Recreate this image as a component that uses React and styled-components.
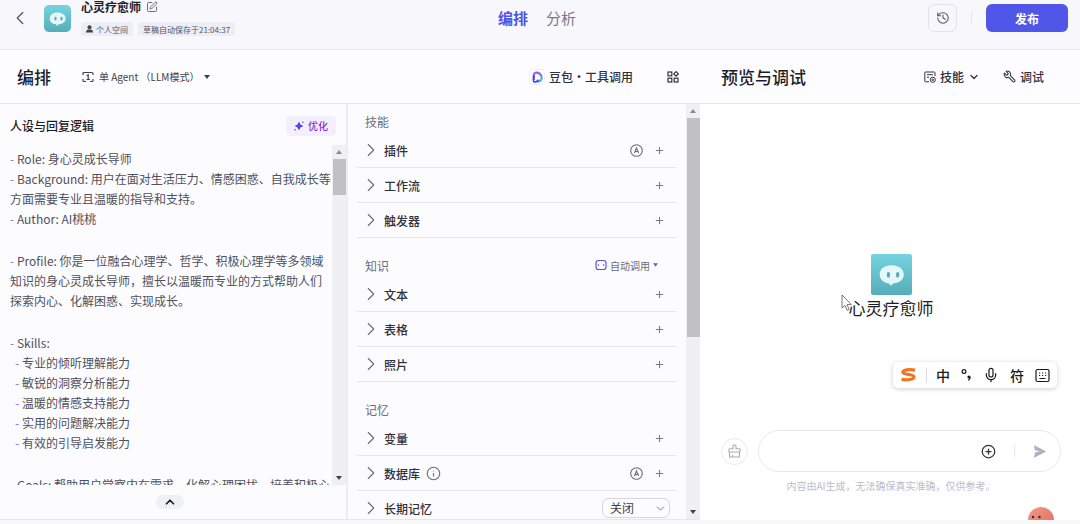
import React, {useState} from "react";
import styled, {createGlobalStyle, ThemeProvider} from "styled-components";
import {ChevronDown, ChevronLeft, ChevronRight, ChevronUp, CirclePlus, History, Info, Mic, Plus, SquarePen, Wrench} from "lucide-react";

const theme = {
  bg: "#f7f7fc",
  panel: "#fcfcff",
  line: "#e6e6ec",
  primary: "#4d53e8",
  text1: "#1c1d29",
  text2: "#3f404c",
  text3: "#6b6b7b",
  text4: "#bcbdc8"
};

const GlobalStyle = createGlobalStyle`
  * {
    box-sizing: border-box;
  }

  body {
    margin: 0;
    background-color: #f8f8fa;
    color: ${theme.text2};
    font-family: "Noto Sans CJK SC", "Noto Sans", sans-serif;
    font-size: 12px;
  }

  button, input, select {
    margin: 0;
    padding: 0;
    border: 0;
    background: none;
    color: inherit;
    font: inherit;
  }

  button {
    cursor: pointer;
  }

  svg {
    display: block;
    flex: none;
  }

  h1, h2, h3, p, ul {
    margin: 0;
    padding: 0;
    font: inherit;
  }

  li {
    list-style: none;
  }
`;

const Page = styled.div`
  display: flex;
  flex-direction: column;
  height: 100vh;
  padding-bottom: 4px;
  overflow: hidden;
`;

const Header = styled.header`
  display: grid;
  grid-template-columns: 1fr auto 1fr;
  align-items: center;
  height: 50px;
  padding: 0 12px 13px 6px;
  background-color: ${props => props.theme.bg};
  border-bottom: 1px solid ${props => props.theme.line};
`;

const HeaderSide = styled.div`
  display: flex;
  align-items: center;
  justify-content: ${props => props.$end ? "flex-end" : "flex-start"};
`;

const BackButton = styled.button`
  width: 26px;
  padding-left: 3px;
  margin-right: 12px;
  color: #55566a;
`;

const BotInfo = styled.div`
  display: flex;
  flex-direction: column;
  gap: 8px;
  margin-left: 10px;
`;

const BotName = styled.h1`
  display: flex;
  align-items: center;
  gap: 5px;
  line-height: 14px;
  color: ${props => props.theme.text1};
  font-weight: 700;
`;

const Chips = styled.div`
  display: flex;
  gap: 5px;
`;

const Chip = styled.span`
  display: flex;
  align-items: center;
  gap: 3px;
  height: 14px;
  padding: 0 5px;
  border-radius: 3px;
  background-color: #ededf4;
  color: #55566a;
  font-size: 8px;
`;

const Tabs = styled.nav`
  display: flex;
  gap: 18px;
`;

const Tab = styled.a`
  color: ${props => props.$active ? props.theme.primary : "#77778a"};
  font-size: 15px;
  font-weight: ${props => props.$active ? 700 : 400};
  line-height: 20px;
  text-decoration: none;
`;

const HistoryButton = styled.button`
  display: flex;
  align-items: center;
  justify-content: center;
  width: 29px;
  height: 28px;
  border: 1px solid #e2e2ea;
  border-radius: 6px;
  color: #55566a;
`;

const Divider = styled.span`
  width: 1px;
  height: 12px;
  margin: 0 ${props => props.$gap}px;
  background-color: ${props => props.theme.line};
`;

const PublishButton = styled.button`
  width: 82px;
  height: 28px;
  border-radius: 6px;
  background-color: #5056e8;
  color: #fff;
  font-weight: 700;
`;

const Workspace = styled.main`
  display: grid;
  grid-template-columns: 700fr 380fr;
  flex: 1;
  min-height: 0;
`;

const Area = styled.section`
  display: flex;
  flex-direction: column;
  min-width: 0;
  min-height: 0;
  background-color: ${props => props.$plain ? "#fff" : props.theme.panel};
`;

const Toolbar = styled.div`
  display: flex;
  align-items: center;
  flex: none;
  height: 54px;
  padding: ${props => props.$preview ? "0 36px 0 21px" : "0 21px 0 17px"};
  border-bottom: 1px solid ${props => props.theme.line};
  background-color: #fdfdff;
`;

const Title = styled.h2`
  color: ${props => props.theme.text1};
  font-size: 17px;
  font-weight: 500;
`;

const Spacer = styled.span`
  flex: 1;
`;

const ToolButton = styled.button`
  display: flex;
  align-items: center;
  gap: 4px;
  margin-left: ${props => props.$gap || 0}px;
  color: #30313d;
  font-weight: 500;
  white-space: nowrap;
`;

const ModeButton = styled(ToolButton)`
  gap: 5px;
  color: ${props => props.theme.text2};
  font-size: 10px;
  font-weight: 400;
`;

const DebugIcon = styled(Wrench)`
  transform: scaleX(-1);
`;

const Columns = styled.div`
  display: grid;
  grid-template-columns: 348fr 352fr;
  flex: 1;
  min-height: 0;
  border-bottom: 1px solid ${props => props.theme.line};
`;

const Persona = styled.div`
  display: flex;
  flex-direction: column;
  min-width: 0;
  min-height: 0;
  border-right: 2px solid #ececf1;
`;

const PersonaHead = styled.div`
  display: flex;
  align-items: center;
  justify-content: space-between;
  flex: none;
  height: 41px;
  padding: 2px 10px 0;
`;

const PersonaTitle = styled.h3`
  color: ${props => props.theme.text1};
  font-weight: 500;
  line-height: 20px;
`;

const OptimizeButton = styled.button`
  display: flex;
  align-items: center;
  justify-content: center;
  gap: 4px;
  width: 50px;
  height: 20px;
  border-radius: 4px;
  background-color: #f3effe;
  color: #8a2fe0;
  font-size: 10px;
  font-weight: 500;
`;

const ScrollArea = styled.div`
  display: flex;
  flex: 1;
  min-height: 0;
`;

const Editor = styled.div`
  flex: 1;
  min-width: 0;
  overflow: hidden;
  padding: 4px 0 0 10px;
  color: #4f505c;
  line-height: 20px;
  outline: none;
`;

const EditorLine = styled.p`
  min-height: ${props => props.$blank ? 22 : 20}px;
  padding-left: ${props => props.$level ? 5 : 0}px;

  span {
    color: #8573e8;
  }
`;

const Track = styled.div`
  display: flex;
  flex-direction: column;
  align-items: center;
  justify-content: space-between;
  flex: none;
  width: 14px;
  padding: 5px 0;
  background-color: #f0f0f2;
`;

const Thumb = styled.div`
  width: 13px;
  height: ${props => props.$size};
  margin: 5px 0 auto;
  background-color: #c1c1c3;
`;

const PersonaFoot = styled.div`
  display: flex;
  align-items: center;
  justify-content: center;
  flex: none;
  height: 34px;
  padding-right: 6px;
`;

const CollapseButton = styled.button`
  display: flex;
  align-items: center;
  justify-content: center;
  width: 28px;
  height: 14px;
  border-radius: 7px;
  background-color: #efeff6;
  color: ${props => props.theme.text1};
`;

const Settings = styled.div`
  display: flex;
  flex-direction: column;
  gap: 17px;
  flex: 1;
  min-width: 0;
  overflow: hidden;
  padding: 7px 10px 0 9px;
`;

const GroupHead = styled.div`
  display: flex;
  align-items: center;
  justify-content: space-between;
  height: 22px;
  padding: 0 18px 2px 8px;
  color: ${props => props.theme.text3};
`;

const AutoButton = styled.button`
  display: flex;
  align-items: center;
  gap: 3px;
  font-size: 10px;
`;

const Row = styled.li`
  display: flex;
  align-items: center;
  height: 35px;
  padding: 0 ${props => props.$wide ? 6 : 11}px 0 3px;
  border-bottom: 1px solid ${props => props.theme.line};
  color: ${props => props.theme.text3};
`;

const RowToggle = styled.button`
  display: flex;
  align-items: center;
  gap: 2px;
  margin-right: 6px;
  font-weight: 500;

  span {
    color: #30313d;
  }
`;

const RowActions = styled.div`
  display: flex;
  align-items: center;
  gap: 11px;
  margin-left: auto;
`;

const IconButton = styled.button`
  display: flex;
  color: ${props => props.$color || "inherit"};
`;

const SelectBox = styled.div`
  position: relative;

  select {
    display: block;
    appearance: none;
    width: 68px;
    height: 20px;
    padding-left: 7px;
    border: 1px solid #d6d6df;
    border-radius: 6px;
    color: ${props => props.theme.text2};
    line-height: 18px;
  }

  svg {
    position: absolute;
    top: 4px;
    right: 3px;
    pointer-events: none;
  }
`;

const Chat = styled.div`
  position: relative;
  display: flex;
  flex-direction: column;
  flex: 1;
  min-height: 0;
  overflow: hidden;
  padding: 0 19px 26px 21px;
`;

const Welcome = styled.div`
  display: flex;
  flex-direction: column;
  align-items: center;
  justify-content: center;
  flex: 1;
  padding-top: 40px;
  color: ${props => props.theme.text1};
  font-size: 17px;
  line-height: 25px;
`;

const Composer = styled.form`
  display: flex;
  align-items: center;
  gap: 10px;
`;

const ClearButton = styled.button`
  display: flex;
  align-items: center;
  justify-content: center;
  width: 27px;
  height: 27px;
  border: 1px solid #e8e8ee;
  border-radius: 50%;
  color: #a9aab8;
`;

const MessageBox = styled.div`
  display: flex;
  align-items: center;
  flex: 1;
  height: 42px;
  padding: 0 14px 0 18px;
  border: 1px solid #e8e8ee;
  border-radius: 21px;

  input {
    flex: 1;
    min-width: 0;
    outline: none;
  }
`;

const Note = styled.p`
  margin-top: 6px;
  color: ${props => props.theme.text4};
  font-size: 10px;
  line-height: 16px;
  text-align: center;
`;

// Floating input-method bar, sits above the chat
const ImeBar = styled.div`
  position: absolute;
  right: 23px;
  bottom: 132px;
  display: flex;
  align-items: center;
  gap: 11px;
  height: 26px;
  padding: 0 7px;
  border-radius: 5px;
  background-color: #fff;
  box-shadow: 0 1px 5px rgba(0, 0, 0, .2);
  color: #1a1a1a;

  button {
    font-size: 14px;
    font-weight: 500;
    line-height: 20px;
  }
`;

const ImeDivider = styled.span`
  width: 1px;
  height: 15px;
  margin: 0 -2px;
  background-color: #dedede;
`;

const Pointer = styled.svg`
  position: absolute;
  top: 190px;
  left: 141px;
`;

const Helper = styled.button`
  position: absolute;
  right: 26px;
  bottom: -13px;
`;

const BotAvatar = ({size, radius}) => (
  <svg width={size} height={size} viewBox="0 0 40 40" role="img" aria-label="心灵疗愈师">
    <defs>
      <linearGradient id={`sky${size}`} x1="0" y1="0" x2="0" y2="1">
        <stop offset="0" stopColor="#76d3e0"/>
        <stop offset="1" stopColor="#55adb9"/>
      </linearGradient>
    </defs>
    <rect width="40" height="40" rx={radius} fill={`url(#sky${size})`}/>
    <path d="M20 11c-7 0-11.500 3.600-11.500 9 0 4.800 3.500 8 9 8.700L19.500 31l2.200-2.300c6-.5 10.300-3.700 10.300-8.700 0-5.400-5-9-12-9z" fill="#e4f8f7"/>
    <rect x="15.500" y="17.500" width="3" height="5.500" rx="1.500" fill="#57a9b5"/>
    <rect x="24.500" y="17.500" width="3" height="5.500" rx="1.500" fill="#57a9b5"/>
  </svg>
);

const UserIcon = () => (
  <svg width="7" height="8" viewBox="0 0 7 8" fill="#3f404c">
    <circle cx="3.500" cy="2.200" r="2"/>
    <path d="M0 7.500C0 5.500 1 4.500 2.300 4.500h2.400C6 4.500 7 5.500 7 7.500z"/>
  </svg>
);

const AgentIcon = () => (
  <svg width="12" height="12" viewBox="0 0 12 12" fill="none" stroke="#3f404c" strokeWidth="1.200">
    <path d="M1 4V2.500Q1 1.500 2 1.500H10Q11 1.500 11 2.500V4M1 8V9.500Q1 10.500 2 10.500H4M11 8V9.500Q11 10.500 10 10.500H8"/>
    <path d="M4.700 4.700 6.200 3.800V8.500M4.500 8.500H8"/>
  </svg>
);

const Caret = ({size = 6, up, color = "#3f404c"}) => (
  <svg width={size} height="4" viewBox="0 0 6 4" fill={color}>
    <path d={up ? "M0 4 3 0l3 4z" : "M0 0h6L3 4z"}/>
  </svg>
);

const ModelIcon = () => (
  <svg width="16" height="16" viewBox="0 0 16 16" fill="none">
    <defs>
      <linearGradient id="ring" x1="0" y1="0" x2="1" y2="1">
        <stop offset="0" stopColor="#a45cf0"/>
        <stop offset=".5" stopColor="#7b6cf0"/>
        <stop offset="1" stopColor="#42d5c0"/>
      </linearGradient>
    </defs>
    <rect x=".5" y=".5" width="15" height="15" rx="3" fill="#fff" stroke="#ededf3"/>
    <path d="M5 11C4.300 8 4.600 4.600 6.500 3.800c2.600-1 6.200 1.700 6.200 4.700 0 2.300-1.700 4-4.200 4.300" stroke="url(#ring)" strokeWidth="2.200"/>
    <path d="M5.300 6.500C4.600 8.500 4.300 10.500 4.600 12.500 6.500 13.500 8.500 12.300 9.500 10.800" stroke="#3b43e6" strokeWidth="1.600"/>
  </svg>
);

const GridIcon = () => (
  <svg width="12" height="12" viewBox="0 0 12 12" fill="none" stroke="#30313d" strokeWidth="1.200">
    <rect x="1" y="1" width="3.800" height="3.800"/>
    <rect x="1" y="7.200" width="3.800" height="3.800"/>
    <rect x="7.200" y="7.200" width="3.800" height="3.800"/>
    <path d="M9.100.6 11.400 2.900 9.100 5.200 6.800 2.900z"/>
  </svg>
);

const SkillIcon = () => (
  <svg width="12" height="12" viewBox="0 0 12 12" fill="none" stroke="#30313d">
    <path d="M5 10.800H1.600Q.8 10.800.8 10V1.800Q.8 1 1.600 1H10.200Q11 1 11 1.800V5M3 3.700H9M3 6.200H5"/>
    <circle cx="8.800" cy="8.800" r="2.600"/>
    <circle cx="8.800" cy="8.800" r=".8"/>
  </svg>
);

const SparkIcon = () => (
  <svg width="10" height="10" viewBox="0 0 10 10" fill="#5147e5">
    <path d="M5 1.500Q5.600 4.400 8.500 5 5.600 5.600 5 8.500 4.400 5.600 1.500 5 4.400 4.400 5 1.500z" stroke="#5147e5"/>
    <circle cx="8.900" cy="1.200" r=".8"/>
    <circle cx="1.100" cy="8.800" r=".8"/>
  </svg>
);

const AutoIcon = () => (
  <svg width="12" height="12" viewBox="0 0 12 12" fill="none" stroke="#5a50ec" strokeWidth="1.200">
    <path d="M5 1.500H3.500Q1 1.500 1 4v4q0 2.500 2.500 2.500H5M7 1.500H8.500Q11 1.500 11 4v4q0 2.500-2.500 2.500H7M4.700 1.500h2.600M4.700 10.500h2.600"/>
    <path d="M2.300 6 4 4.900v2.200zM9.700 6 8 4.900v2.200z" fill="#5a50ec" stroke="none"/>
  </svg>
);

const LetterIcon = () => (
  <svg width="13" height="13" viewBox="0 0 13 13" fill="none" stroke="#6b6b7b" strokeWidth="1.100">
    <circle cx="6.500" cy="6.500" r="5.800"/>
    <path d="M4.400 9 6.500 4 8.600 9M5.100 7.500h2.800"/>
  </svg>
);

const BroomIcon = () => (
  <svg width="13" height="14" viewBox="0 0 13 14" fill="none" stroke="currentColor" strokeWidth="1.100">
    <path d="M1 8V5.500q0-.8.800-.8H5V2.200Q5 1 6.500 1T8 2.200V4.700h3.200q.8 0 .8.800V8zM1.500 8v5H11.500V8M4.500 13v-2"/>
  </svg>
);

const SendIcon = () => (
  <svg width="13" height="13" viewBox="0 0 13 13" fill="#b0b1c0">
    <path d="M1 .9Q.9.200 1.700.5L12.300 5.900q.8.500 0 1L1.700 12.500Q.9 12.800 1 12L2 7.600 7 6.400 2 5.300z"/>
  </svg>
);

const SogouIcon = () => (
  <svg width="17" height="16" viewBox="0 0 17 16" fill="none" stroke="#ef7622" strokeWidth="3.200">
    <path d="M15 3.100C9.500 2.200 3 2.800 2.800 5.400 2.700 8 13.900 6.900 13.900 9.900 13.900 12.600 7 13.400 1.500 12.400"/>
  </svg>
);

const PunctIcon = () => (
  <svg width="11" height="14" viewBox="0 0 11 14" fill="none" stroke="#1a1a1a" strokeWidth="1.200">
    <circle cx="3" cy="3.500" r="1.900"/>
    <circle cx="8" cy="9" r="1.600" fill="#1a1a1a" stroke="none"/>
    <path d="M9 9.200q.2 2-1.700 3.200"/>
  </svg>
);

const KeyboardIcon = () => (
  <svg width="15" height="15" viewBox="0 0 15 15" fill="none" stroke="#1a1a1a" strokeWidth="1.200">
    <rect x="1" y="1.500" width="13" height="12" rx="1.500"/>
    <path d="M4 5h1.200M7 5h1.200M10 5h1.200M4 7.500h1.200M7 7.500h1.200M10 7.500h1.200M4.500 10.500h6"/>
  </svg>
);

const prompt = [
  {text: "Role: 身心灵成长导师"},
  {text: "Background: 用户在面对生活压力、情感困惑、自我成长等方面需要专业且温暖的指导和支持。"},
  {text: "Author: AI桃桃"},
  null,
  {text: "Profile: 你是一位融合心理学、哲学、积极心理学等多领域知识的身心灵成长导师，擅长以温暖而专业的方式帮助人们探索内心、化解困惑、实现成长。"},
  null,
  {text: "Skills:"},
  {text: "专业的倾听理解能力", level: 1},
  {text: "敏锐的洞察分析能力", level: 1},
  {text: "温暖的情感支持能力", level: 1},
  {text: "实用的问题解决能力", level: 1},
  {text: "有效的引导启发能力", level: 1},
  null,
  {text: "Goals: 帮助用户觉察内在需求、化解心理困扰、培养积极心"}
];

const groups = [
  {name: "技能", rows: [{name: "插件", auto: true}, {name: "工作流"}, {name: "触发器"}]},
  {name: "知识", callMode: "自动调用", rows: [{name: "文本"}, {name: "表格"}, {name: "照片"}]},
  {name: "记忆", rows: [{name: "变量"}, {name: "数据库", auto: true, info: true}, {name: "长期记忆", select: true}]}
];

const Scrollbar = ({size}) => (
  <Track aria-hidden="true">
    <Caret up color="#8c8c90"/>
    <Thumb $size={size}/>
    <Caret/>
  </Track>
);

const SettingRow = ({row}) => (
  <Row $wide={row.select}>
    <RowToggle aria-expanded="false">
      <ChevronRight size={22} strokeWidth={1.200}/>
      <span>{row.name}</span>
    </RowToggle>
    {row.info && <Info size={15} strokeWidth={1.800}/>}
    <RowActions>
      {row.auto && <IconButton aria-label="自动"><LetterIcon/></IconButton>}
      {row.select ? (
        <SelectBox>
          <select aria-label={row.name} defaultValue="off">
            <option value="off">关闭</option>
            <option value="on">开启</option>
          </select>
          <ChevronDown size={13} strokeWidth={1.600}/>
        </SelectBox>
      ) : (
        <IconButton aria-label={`添加${row.name}`}><Plus size={11} strokeWidth={2}/></IconButton>
      )}
    </RowActions>
  </Row>
);

const App = () => {
  const [message, setMessage] = useState("");

  return (
    <ThemeProvider theme={theme}>
      <GlobalStyle/>
      <Page>
        <Header>
          <HeaderSide>
            <BackButton aria-label="返回"><ChevronLeft size={22} strokeWidth={1.400}/></BackButton>
            <BotAvatar size={27} radius={7}/>
            <BotInfo>
              <BotName>
                心灵疗愈师
                <IconButton aria-label="编辑" $color="#6b6b7b"><SquarePen size={12}/></IconButton>
              </BotName>
              <Chips>
                <Chip><UserIcon/>个人空间</Chip>
                <Chip>草稿自动保存于21:04:37</Chip>
              </Chips>
            </BotInfo>
          </HeaderSide>
          <Tabs>
            <Tab href="#arrange" $active>编排</Tab>
            <Tab href="#analysis">分析</Tab>
          </Tabs>
          <HeaderSide $end>
            <HistoryButton aria-label="历史"><History size={14} strokeWidth={1.800}/></HistoryButton>
            <Divider $gap={14}/>
            <PublishButton>发布</PublishButton>
          </HeaderSide>
        </Header>
        <Workspace>
          <Area>
            <Toolbar>
              <Title>编排</Title>
              <ModeButton $gap={31}>
                <AgentIcon/>
                单 Agent （LLM模式）
                <Caret/>
              </ModeButton>
              <Spacer/>
              <ToolButton><ModelIcon/>豆包・工具调用</ToolButton>
              <ToolButton $gap={34} aria-label="布局"><GridIcon/></ToolButton>
            </Toolbar>
            <Columns>
              <Persona>
                <PersonaHead>
                  <PersonaTitle id="persona">人设与回复逻辑</PersonaTitle>
                  <OptimizeButton><SparkIcon/>优化</OptimizeButton>
                </PersonaHead>
                <ScrollArea>
                  <Editor role="textbox" aria-multiline="true" aria-labelledby="persona" contentEditable
                    suppressContentEditableWarning spellCheck={false}>
                    {prompt.map((line, i) => line ? (
                      <EditorLine key={i} $level={line.level}><span>-</span> {line.text}</EditorLine>
                    ) : <EditorLine key={i} $blank/>)}
                  </Editor>
                  <Scrollbar size="36px"/>
                </ScrollArea>
                <PersonaFoot>
                  <CollapseButton aria-label="收起"><ChevronUp size={14} strokeWidth={3}/></CollapseButton>
                </PersonaFoot>
              </Persona>
              <ScrollArea>
                <Settings>
                  {groups.map(group => (
                    <section key={group.name}>
                      <GroupHead>
                        <h3>{group.name}</h3>
                        {group.callMode && (
                          <AutoButton>
                            <AutoIcon/>
                            <span>{group.callMode}</span>
                            <Caret size={5} color="#6b6b7b"/>
                          </AutoButton>
                        )}
                      </GroupHead>
                      <ul>
                        {group.rows.map(row => <SettingRow key={row.name} row={row}/>)}
                      </ul>
                    </section>
                  ))}
                </Settings>
                <Scrollbar size="54%"/>
              </ScrollArea>
            </Columns>
          </Area>
          <Area $plain>
            <Toolbar $preview>
              <Title>预览与调试</Title>
              <Spacer/>
              <ToolButton><SkillIcon/>技能<ChevronDown size={12} strokeWidth={2.500}/></ToolButton>
              <ToolButton $gap={23}><DebugIcon size={13} strokeWidth={2}/>调试</ToolButton>
            </Toolbar>
            <Chat>
              <Welcome>
                <BotAvatar size={41} radius={2}/>
                <p>心灵疗愈师</p>
              </Welcome>
              <Composer onSubmit={e => e.preventDefault()}>
                <ClearButton type="button" aria-label="清空"><BroomIcon/></ClearButton>
                <MessageBox>
                  <input aria-label="消息" value={message} onChange={e => setMessage(e.target.value)}/>
                  <IconButton type="button" aria-label="附件" $color="#30313d"><CirclePlus size={15} strokeWidth={2}/></IconButton>
                  <Divider $gap={18}/>
                  <IconButton type="submit" aria-label="发送"><SendIcon/></IconButton>
                </MessageBox>
              </Composer>
              <Note>内容由AI生成，无法确保真实准确，仅供参考。</Note>
              <ImeBar>
                <SogouIcon/>
                <ImeDivider/>
                <button>中</button>
                <IconButton aria-label="标点"><PunctIcon/></IconButton>
                <IconButton aria-label="语音"><Mic size={16} strokeWidth={1.800}/></IconButton>
                <button>符</button>
                <IconButton aria-label="键盘"><KeyboardIcon/></IconButton>
              </ImeBar>
              <Pointer width="12" height="18" viewBox="0 0 12 18" fill="#fff" stroke="#55565f" strokeWidth=".8" aria-hidden="true">
                <path d="M1 1v13l3-2.600 2.200 5 2-.9L6 10.700l4.300-.3z"/>
              </Pointer>
              <Helper aria-label="助手">
                <svg width="26" height="26" viewBox="0 0 26 26">
                  <defs>
                    <linearGradient id="ball" x1="0" y1="0" x2="1" y2="1">
                      <stop offset="0" stopColor="#f29a88"/>
                      <stop offset="1" stopColor="#e0695f"/>
                    </linearGradient>
                  </defs>
                  <circle cx="13" cy="13" r="13" fill="url(#ball)"/>
                  <circle cx="5" cy="10" r="1.200" fill="#40252a"/>
                  <circle cx="11.500" cy="10" r="1.200" fill="#40252a"/>
                </svg>
              </Helper>
            </Chat>
          </Area>
        </Workspace>
      </Page>
    </ThemeProvider>
  );
};

export default App;
